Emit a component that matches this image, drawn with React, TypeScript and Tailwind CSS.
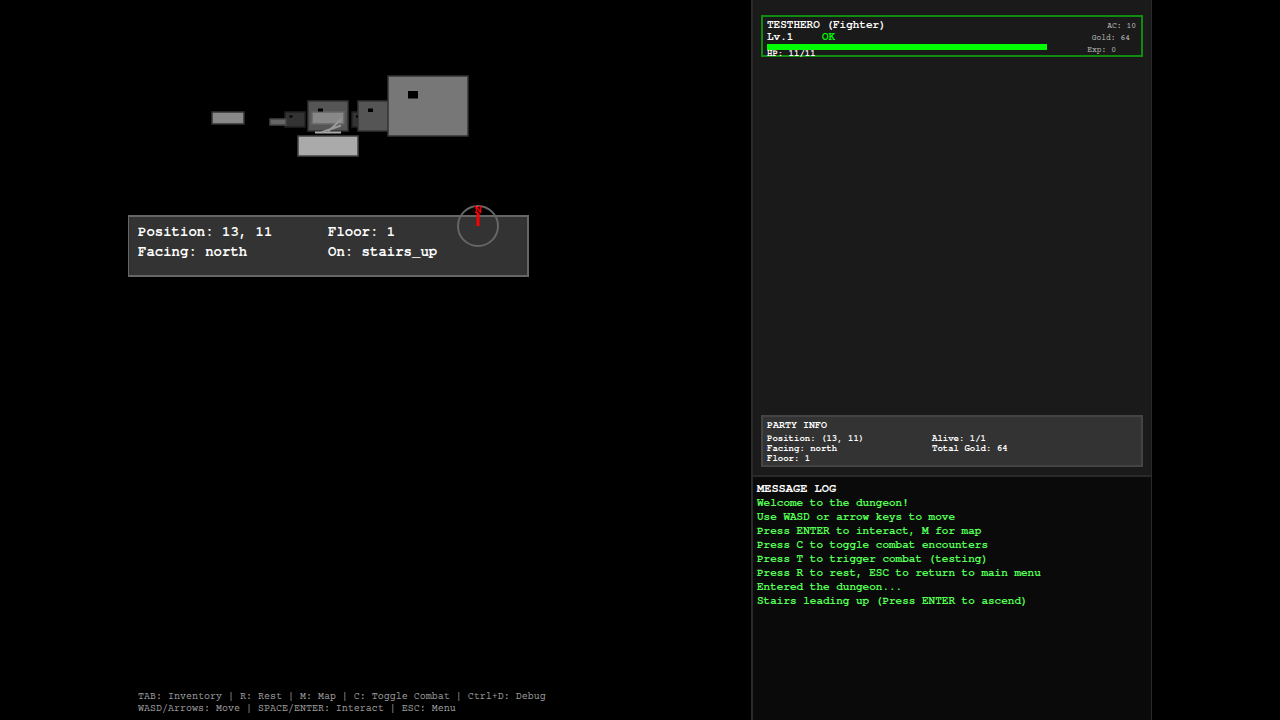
import React from "react";

const messages = [
  "Welcome to the dungeon!",
  "Use WASD or arrow keys to move",
  "Press ENTER to interact, M for map",
  "Press C to toggle combat encounters",
  "Press T to trigger combat (testing)",
  "Press R to rest, ESC to return to main menu",
  "Entered the dungeon...",
  "Stairs leading up (Press ENTER to ascend)",
];

function DungeonView() {
  return (
    <svg className="block h-[215px] w-[400px]" viewBox="0 0 400 215" role="img" aria-label="Dungeon view">
      <g stroke="#333" strokeWidth="1.5">
        <rect x="84" y="112" width="32" height="12" fill="#888" />
        <rect x="157" y="112" width="20" height="15" fill="#333" stroke="#222" />
        <rect x="142" y="119" width="16" height="6" fill="#666" stroke="#444" />
        <rect x="224" y="112" width="20" height="15" fill="#333" stroke="#222" />
        <rect x="180" y="101" width="40" height="30" fill="#555" />
        <rect x="230" y="101" width="40" height="30" fill="#555" />
        <rect x="184" y="112" width="32" height="12" fill="#888" stroke="#666" />
        <rect x="260" y="76" width="80" height="60" fill="#777" />
        <rect x="170" y="136" width="60" height="20" fill="#aaa" stroke="#444" />
      </g>
      <g fill="#000">
        <rect x="161.500" y="115.500" width="3" height="2" />
        <rect x="228" y="115.500" width="2" height="2" />
        <rect x="190" y="108.500" width="5" height="3" />
        <rect x="240" y="108.500" width="5" height="3.500" />
        <rect x="280" y="91" width="10" height="7.500" />
      </g>
      <g stroke="#aaa" strokeWidth="2" fill="none">
        <path d="M187 132.500H213" />
        <path d="M193 132.500L213 125.500M200 131.500L213 119.500" stroke="#999" />
      </g>
    </svg>
  );
}

function Compass() {
  return (
    <svg className="absolute -top-[17px] right-[23px] size-[52px]" viewBox="0 0 52 52" role="img" aria-label="Compass">
      <circle cx="26" cy="26" r="20" fill="none" stroke="#666" strokeWidth="2" />
      <path d="M26 26V13" stroke="#f00" strokeWidth="3" />
      <text x="26" y="13" textAnchor="middle" fill="#f00" fontSize="12" fontWeight="700">N</text>
    </svg>
  );
}

function LocationPanel() {
  return (
    <section className="relative w-[401px] border-2 border-l border-[#666] bg-[#333] pt-1 pb-[14px] pl-[9px] text-[14px] leading-5 font-bold">
      <div className="grid grid-cols-[190px_1fr]">
        <p>Position: 13, 11</p>
        <p>Floor: 1</p>
        <p>Facing: north</p>
        <p>On: stairs_up</p>
      </div>
      <Compass />
    </section>
  );
}

function HeroCard() {
  return (
    <article className="flex h-[42px] justify-between border-2 border-[#118c11] pt-[1px] pl-1 text-[11px] leading-3 font-bold">
      <div className="w-[280px]">
        <h2>TESTHERO (Fighter)</h2>
        <p className="grid grid-cols-[55px_1fr]">
          <span>Lv.1</span>
          <span className="text-[#00ff00]">OK</span>
        </p>
        <div className="mt-[2px] h-[6px] bg-[#00ff00]" />
        <p className="text-[9px] leading-[6px]">HP: 11/11</p>
      </div>
      <div className="flex flex-col items-end pt-[3px] font-['Courier_Prime','Liberation_Mono',monospace] text-[8px] font-normal text-[#bbb]">
        <p className="pr-[5px]">AC: 10</p>
        <p className="pr-[11px]">Gold: 64</p>
        <p className="pr-[25px]">Exp: 0</p>
      </div>
    </article>
  );
}

function PartyInfo() {
  return (
    <section className="h-[52px] border-2 border-[#444] bg-[#333] pl-1 text-[9px] leading-[10px] font-bold">
      <h2 className="text-[10px] leading-[14px]">PARTY INFO</h2>
      <div className="grid grid-cols-[165px_1fr] pt-[2px]">
        <p>Position: (13, 11)</p>
        <p>Alive: 1/1</p>
        <p>Facing: north</p>
        <p>Total Gold: 64</p>
        <p>Floor: 1</p>
      </div>
    </section>
  );
}

export default function App() {
  return (
    <div className="min-h-screen bg-black font-['TeX_Gyre_Cursor','Liberation_Mono',monospace] text-white">
      <div className="mx-auto flex min-h-screen max-w-5xl">
        <main className="flex min-w-0 flex-1 flex-col">
          <DungeonView />
          <LocationPanel />
          <footer className="mt-auto pb-[5px] pl-[10px] font-['Courier_Prime','Liberation_Mono',monospace] text-[10px] leading-3 text-[#999]">
            <p>TAB: Inventory | R: Rest | M: Map | C: Toggle Combat | Ctrl+D: Debug</p>
            <p>WASD/Arrows: Move | SPACE/ENTER: Interact | ESC: Menu</p>
          </footer>
        </main>
        <aside className="flex w-[401px] shrink-0 flex-col border-r border-l-2 border-[#2a2a2a]">
          <div className="flex h-[477px] flex-col justify-between border-b-2 border-[#2a2a2a] bg-[#1a1a1a] px-2 pt-[15px] pb-2">
            <HeroCard />
            <PartyInfo />
          </div>
          <section className="flex-1 bg-[#0a0a0a] px-1 pt-[2px]">
            <h2 className="text-[12px] leading-4 font-bold">MESSAGE LOG</h2>
            <ul className="text-[11px] leading-[14px] font-bold text-[#55ff55]">
              {messages.map((message) => (
                <li key={message}>{message}</li>
              ))}
            </ul>
          </section>
        </aside>
      </div>
    </div>
  );
}
